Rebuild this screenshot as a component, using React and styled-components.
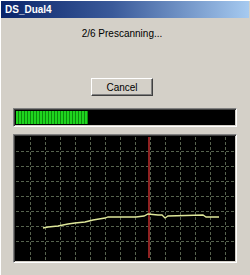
import React from 'react';
import styled, { createGlobalStyle } from 'styled-components';

const GlobalStyle = createGlobalStyle`
    body {
        margin: 0;
        background: #d4d0c8;
    }
`;

const Window = styled.div`
    width: 250px;
    height: 275px;
    box-sizing: border-box;
    padding: 1px 1px 0 1px;
    background: #d4d0c8;
    box-shadow: inset 1px 1px #ffffff;
    display: flex;
    flex-direction: column;
    font-family: "Liberation Sans", Arial, sans-serif;
`;

const TitleBar = styled.div`
    height: 17px;
    display: flex;
    align-items: center;
    padding-left: 4px;
    background: linear-gradient(to right, #0a246a 0%, #3a5a9a 45%, #a6caf0 100%);
    color: #ffffff;
    font-weight: bold;
    font-size: 10px;
    letter-spacing: 0;
`;

const Body = styled.div`
    flex: 1;
    display: flex;
    flex-direction: column;
    padding: 0 12px 0 12px;
`;

const Status = styled.div`
    margin-top: 10px;
    margin-right: 6px;
    text-align: center;
    font-size: 10px;
    line-height: 12px;
    color: #000000;
`;

const ButtonRow = styled.div`
    margin-top: 38px;
    margin-right: 6px;
    display: flex;
    justify-content: center;
`;

const Button = styled.button`
    width: 62px;
    height: 18px;
    padding: 0;
    background: #d4d0c8;
    border: 1px solid;
    border-color: #ffffff #404040 #404040 #ffffff;
    box-shadow: inset -1px -1px #808080;
    font-family: "Liberation Sans", Arial, sans-serif;
    font-size: 10px;
    color: #000000;
`;

const Sunken = styled.div`
    box-sizing: border-box;
    border: 1px solid;
    border-color: #808080 #ffffff #ffffff #808080;
    box-shadow: inset 1px 1px #404040, inset -1px -1px #d4d0c8;
    padding: 2px;
    margin-top: ${p => p.$gap}px;
    height: ${p => p.$h}px;
    background: #000000;
`;

const Track = styled.div`
    height: 100%;
    background: #000000;
    display: flex;
`;

const Fill = styled.div`
    height: 100%;
    background: repeating-linear-gradient(
        to right,
        #1fd41f 0px,
        #1fd41f 2px,
        #0c8a0c 2px,
        #0c8a0c 3px
    );
`;

const Graph = styled.svg`
    display: block;
    width: 100%;
    height: 100%;
`;

const vLines = Array.from({ length: 14 }, (_, i) => 14 + i * 15);
const hLines = Array.from({ length: 7 }, (_, i) => 14 + i * 15);

const curve = [
    [27, 91], [32, 90], [42, 89], [52, 87], [59, 86], [69, 85], [77, 83],
    [89, 81], [92, 80], [107, 80], [120, 80], [128, 79], [132, 77],
    [142, 78], [146, 78], [149, 81], [152, 79], [187, 78], [190, 80], [203, 80]
];

const App = () => {
    const progress = 0.33;
    return (
        <>
            <GlobalStyle />
            <Window>
                <TitleBar>DS_Dual4</TitleBar>
                <Body>
                    <Status>2/6 Prescanning...</Status>
                    <ButtonRow>
                        <Button>Cancel</Button>
                    </ButtonRow>
                    <Sunken $gap={12} $h={19}>
                        <Track>
                            <Fill style={{ width: `${progress * 100}%` }} />
                        </Track>
                    </Sunken>
                    <Sunken $gap={7} $h={129}>
                        <Graph viewBox="0 0 218 123" preserveAspectRatio="none">
                            {vLines.map(x => (
                                <line key={'v' + x} x1={x + 0.5} y1="0" x2={x + 0.5} y2="123"
                                    stroke="#56624e" strokeDasharray="3 2" />
                            ))}
                            {hLines.map(y => (
                                <line key={'h' + y} x1="0" y1={y + 0.5} x2="218" y2={y + 0.5}
                                    stroke="#56624e" strokeDasharray="3 2" />
                            ))}
                            <line x1="133" y1="0" x2="133" y2="121" stroke="#7a1a1a" strokeWidth="2" />
                            <line x1="133" y1="0" x2="133" y2="121" stroke="#b03030" strokeWidth="0.8" />
                            <polyline
                                points={curve.map(p => p.join(',')).join(' ')}
                                fill="none"
                                stroke="#dfe89a"
                                strokeWidth="1.3"
                            />
                        </Graph>
                    </Sunken>
                </Body>
            </Window>
        </>
    );
};

export default App;
